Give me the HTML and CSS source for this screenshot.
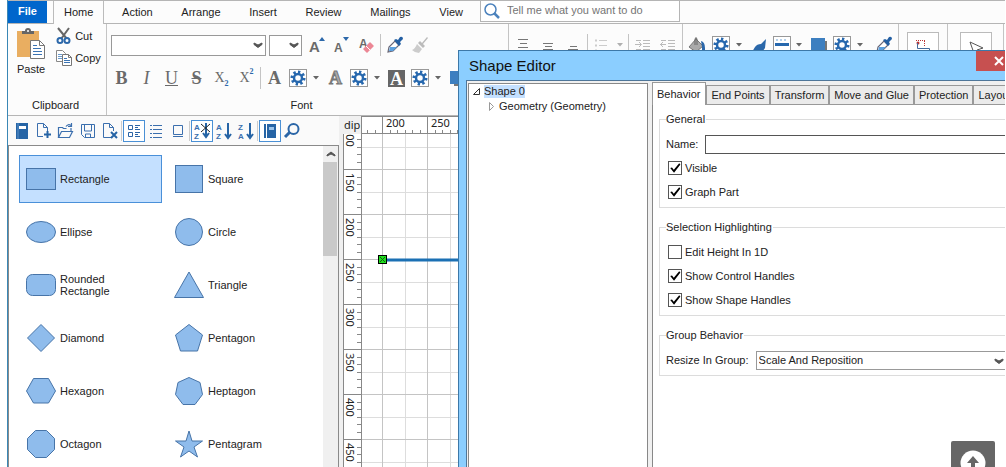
FILE: index.html
```html
<!DOCTYPE html>
<html lang="en">
<head>
    <meta charset="UTF-8">
    <meta name="viewport" content="width=device-width, initial-scale=1.0">
    <title>Shape Editor</title>
    <link rel="stylesheet" href="styles.css">
</head>
<body>
    <!-- shared icons -->
    <svg class="sprite" width="0" height="0">
        <symbol id="chevron" viewBox="0 0 10 6"><path d="M1 1v1.500l4 3 4-3V1L5 3z" fill="#555" stroke="#555"/></symbol>
        <symbol id="caret" viewBox="0 0 6 4"><path d="M0 0h6L3 3.500z" fill="#666"/></symbol>
        <symbol id="gear" viewBox="0 0 18 18">
            <rect x=".5" y=".5" width="17" height="17" fill="#fff" stroke="#999"/>
            <circle cx="9" cy="9" r="6" fill="none" stroke="#2768ae" stroke-width="3" pathLength="16" stroke-dasharray="1 1"/>
            <circle cx="9" cy="9" r="4" fill="none" stroke="#2768ae" stroke-width="2.500"/>
        </symbol>
        <symbol id="dropper" viewBox="0 0 18 18">
            <path d="M2 16l1-5 6-6 4 4-6 6z" fill="#fff" stroke="#667" stroke-width="1.200"/>
            <path d="M3 15l1-4h7l-4 4z" fill="#5ca1df"/>
            <path d="M8 4l2-1 2 1 2-3q3-1 3 2l-3 3 1 2-2 2z" fill="#235fa3"/>
        </symbol>
        <symbol id="swatch" viewBox="0 0 18 18"><path d="M5 5h12v12H5z" fill="#777"/><path d="M1 2h14v13H1z" fill="#3d7fc0"/></symbol>
        <symbol id="brush" viewBox="0 0 18 18"><path d="M17 3l-1 9q-3 5-8 5H2v-2q3-1 4-4 2-3 6-3z" fill="#2b68aa"/></symbol>
    </svg>

    <div class="app">
        <nav class="ribbon-tabs">
            <button class="file-tab">File</button>
            <div class="tab-list">
                <button class="tab active">Home</button>
                <button class="tab">Action</button>
                <button class="tab">Arrange</button>
                <button class="tab">Insert</button>
                <button class="tab">Review</button>
                <button class="tab">Mailings</button>
                <button class="tab">View</button>
            </div>
            <label class="search">
                <svg width="18" height="18" viewBox="0 0 18 18"><circle cx="7.500" cy="7.500" r="5.500" fill="#fff" stroke="#4c82bd" stroke-width="1.500"/><path d="M11 11l5 5" stroke="#4c82bd" stroke-width="2.500"/></svg>
                <input type="text" placeholder="Tell me what you want to do" aria-label="Search">
            </label>
        </nav>

        <div class="ribbon">
            <section class="group clipboard">
                <div class="clip-tools">
                    <button class="paste">
                        <svg width="28" height="32" viewBox="0 0 28 32">
                            <path d="M0 3h22v26H0z" fill="#e9ae61"/>
                            <path d="M5 6V3h3q0-3 3-3t3 3h3v3z" fill="#666"/><circle cx="11" cy="3" r="1" fill="#fff"/>
                            <path d="M13.500 12.500h9l5 5v13h-14z" fill="#fff" stroke="#777"/><path d="M22.500 12.500v5h5" fill="none" stroke="#777"/>
                            <path d="M16 17.500h4M16 20.500h8M16 23.500h9M16 26.500h9" stroke="#3b74b4"/>
                        </svg>
                        Paste
                    </button>
                    <div class="clip-list">
                        <button class="clip-item">
                            <svg width="16" height="16" viewBox="0 0 16 16"><path d="M2 0l9 11M13 0L5 11" stroke="#666" stroke-width="2"/><circle cx="4" cy="12.500" r="2.500" fill="#fff" stroke="#2c68aa" stroke-width="2"/><circle cx="11" cy="12.500" r="2.500" fill="#fff" stroke="#2c68aa" stroke-width="2"/></svg>
                            Cut
                        </button>
                        <button class="clip-item">
                            <svg width="16" height="16" viewBox="0 0 16 16"><path d="M.5.5h6l3 3v8h-9z" fill="#fff" stroke="#888"/><path d="M2 4.500h4M2 6.500h4M2 8.500h4" stroke="#6b9bcd"/><path d="M6.500 4.500h6l3 3v8h-9z" fill="#fff" stroke="#777"/><path d="M12.500 4.500v3h3" fill="none" stroke="#777"/><path d="M8 8.500h3M8 10.500h6M8 12.500h6" stroke="#3b74b4"/></svg>
                            Copy
                        </button>
                    </div>
                </div>
                <div class="group-label">Clipboard</div>
            </section>

            <section class="group font">
                <div class="row">
                    <span class="combo family"><select aria-label="Font family"><option></option></select><svg width="10" height="6"><use href="#chevron"/></svg></span>
                    <span class="combo size"><select aria-label="Font size"><option></option></select><svg width="10" height="6"><use href="#chevron"/></svg></span>
                    <button class="tool"><svg width="18" height="18" viewBox="0 0 18 18"><text x="1" y="16" class="glyph-a big">A</text><path d="M11 5l3-4 3 4z" fill="#2c68aa"/></svg></button>
                    <button class="tool"><svg width="18" height="18" viewBox="0 0 18 18"><text x="1" y="16" class="glyph-a">A</text><path d="M10 1h6l-3 4z" fill="#2c68aa"/></svg></button>
                    <button class="tool"><svg width="18" height="18" viewBox="0 0 18 18"><text x="1" y="12" class="glyph-a">A</text><path d="M12 7l3 3-6 6-3-3z" fill="#ec8795" stroke="#ec8795" stroke-linejoin="round" stroke-width="1.500"/><path d="M8 10l4 4" stroke="#fff"/></svg></button>
                    <i class="sep"></i>
                    <button class="tool"><svg width="18" height="18"><use href="#dropper"/></svg></button>
                    <button class="tool"><svg width="18" height="18" viewBox="0 0 18 18"><path d="M16 1l1 1-5 6 2 2-2 2-5-5 2-2 2 2z" fill="#bbb"/><path d="M6 8l5 5-3 4q-4 0-7-3 3-1 5-6z" fill="#ccc"/></svg></button>
                </div>
                <div class="row">
                    <button class="tool letter bold">B</button>
                    <button class="tool letter italic">I</button>
                    <button class="tool letter underline">U</button>
                    <button class="tool letter strike">S</button>
                    <button class="tool letter script">X<sub>2</sub></button>
                    <button class="tool letter script">X<sup>2</sup></button>
                    <i class="sep"></i>
                    <button class="tool letter bold">A</button>
                    <button class="gear"><svg width="18" height="18"><use href="#gear"/></svg></button>
                    <button class="drop"><svg width="6" height="4"><use href="#caret"/></svg></button>
                    <button class="tool letter bold outline">A</button>
                    <button class="gear"><svg width="18" height="18"><use href="#gear"/></svg></button>
                    <button class="drop"><svg width="6" height="4"><use href="#caret"/></svg></button>
                    <button class="tool letter"><span class="inverse">A</span></button>
                    <button class="gear"><svg width="18" height="18"><use href="#gear"/></svg></button>
                    <button class="drop"><svg width="6" height="4"><use href="#caret"/></svg></button>
                    <button class="tool"><svg width="18" height="18"><use href="#swatch"/></svg></button>
                </div>
                <div class="group-label">Font</div>
            </section>

            <section class="group paragraph">
                <div class="row">
                    <button class="tool"><svg width="18" height="18" viewBox="0 0 18 18"><path d="M4 3.500h10M6 7.500h7M4 11.500h10" stroke="#777"/></svg></button>
                    <button class="tool"><svg width="18" height="18" viewBox="0 0 18 18"><path d="M4 7.500h10M6 10.500h7M4 13.500h10" stroke="#777"/></svg></button>
                    <button class="tool"><svg width="18" height="18" viewBox="0 0 18 18"><path d="M6 10.500h7M4 13.500h10" stroke="#777"/></svg></button>
                    <i class="sep"></i>
                    <button class="tool"><svg width="18" height="18" viewBox="0 0 18 18"><path d="M3 4.500h2M3 9.500h2M3 14.500h2" stroke="#ccc" stroke-width="2"/><path d="M7 4.500h8M7 9.500h8M7 14.500h8" stroke="#ccc"/></svg></button>
                    <button class="drop faded"><svg width="6" height="4"><use href="#caret"/></svg></button>
                    <i class="sep"></i>
                    <button class="tool"><svg width="18" height="18" viewBox="0 0 18 18"><path d="M2 4.500h5M9 4.500h7M9 7.500h7M9 10.500h7M2 13.500h5M9 13.500h7M1 8.500h6M5 6l2.500 2.500L5 11" fill="none" stroke="#bbb"/></svg></button>
                    <button class="tool"><svg width="18" height="18" viewBox="0 0 18 18"><path d="M2 4.500h5M9 4.500h7M9 7.500h7M9 10.500h7M2 13.500h5M9 13.500h7M1 8.500h6M4 6L1.500 8.500 4 11" fill="none" stroke="#bbb"/></svg></button>
                </div>
            </section>

            <section class="group drawing">
                <div class="row">
                    <button class="tool"><svg width="18" height="18" viewBox="0 0 18 18"><path d="M8 3l7 7-7 6-7-5z" fill="#aaa" stroke="#777"/><path d="M7 9V3q1-3 2 0v6" fill="none" stroke="#666"/><path d="M13 5q4 1 4 7v4h-3v-5z" fill="#2c68aa"/></svg></button>
                    <button class="gear"><svg width="18" height="18"><use href="#gear"/></svg></button>
                    <button class="drop"><svg width="6" height="4"><use href="#caret"/></svg></button>
                    <button class="tool"><svg width="18" height="18"><use href="#brush"/></svg></button>
                    <button class="gear"><svg width="18" height="18" viewBox="0 0 18 18"><rect x=".5" y=".5" width="17" height="17" fill="#fff" stroke="#999"/><path d="M3 4h12" stroke="#6ba3d7" stroke-dasharray="2 2"/><path d="M2 8.500h14" stroke="#2768ae" stroke-width="3"/></svg></button>
                    <button class="drop"><svg width="6" height="4"><use href="#caret"/></svg></button>
                    <button class="tool"><svg width="18" height="18"><use href="#swatch"/></svg></button>
                    <button class="gear"><svg width="18" height="18"><use href="#gear"/></svg></button>
                    <button class="drop"><svg width="6" height="4"><use href="#caret"/></svg></button>
                    <button class="tool last"><svg width="18" height="18"><use href="#dropper"/></svg></button>
                </div>
            </section>

            <section class="group connector">
                <button class="large"><svg width="18" height="18" viewBox="0 0 18 18"><path d="M2 1.500h9M10.500 2v6" stroke="#b33" stroke-dasharray="1 1"/><circle cx="4" cy="4" r="1.500" fill="#b33"/><path d="M3.500 4v5.500h12V17" fill="none" stroke="#446b9c"/></svg></button>
            </section>
            <section class="group pointer">
                <button class="large"><svg width="18" height="18" viewBox="0 0 18 18"><path d="M3 3l13 6-6 2-2 6z" fill="#fff" stroke="#555"/></svg></button>
            </section>
        </div>

        <div class="workspace">
            <aside class="library">
                <div class="toolbar">
                    <button><svg width="16" height="16" viewBox="0 0 16 16"><path d="M2 0h12v16H2z" fill="#2664a5"/><path d="M5 3h7v3H5z" fill="#fff"/><path d="M4 0v16" stroke="#5b93cb"/></svg></button>
                    <button><svg width="16" height="16" viewBox="0 0 16 16"><path d="M7 13.500H1.500V.5h6l4 4V8M7.500.5v4h4" fill="none" stroke="#3b6fae"/><path d="M11.500 8v7M8 11.500h7" stroke="#2664a5" stroke-width="2"/></svg></button>
                    <button><svg width="16" height="16" viewBox="0 0 16 16"><path d="M.5 14.500V4.500h4l1 1h3M.5 14.500l3-6h11l-3 6zM8 3.500q2-3 5-1M13.500 0v3.500H10M13 5v3" fill="none" stroke="#3b6fae" stroke-width="1.200"/></svg></button>
                    <button><svg width="16" height="16" viewBox="0 0 16 16"><path d="M1.500 1.500h13v13h-10l-3-3zM4.500 2v6h7V2M5.500 14v-3h5v3" fill="none" stroke="#3b6fae"/></svg></button>
                    <button><svg width="16" height="16" viewBox="0 0 16 16"><path d="M9 14.500H1.500V.5h6l4 4V8M7.500.5v4h4" fill="none" stroke="#3b6fae"/><path d="M9 9l6 6M15 9l-6 6" stroke="#2664a5" stroke-width="2"/></svg></button>
                    <i class="tool-sep"></i>
                    <button class="pressed"><svg width="16" height="16" viewBox="0 0 16 16"><path d="M2.500 2.500h4v4h-4zM2.500 9.500h4v4h-4zM9 2.500h5M9 4.500h3M9 6.500h5M9 9.500h5M9 11.500h3M9 13.500h5" fill="none" stroke="#2b64a5"/></svg></button>
                    <button><svg width="16" height="16" viewBox="0 0 16 16"><path d="M2 2.500h2M2 6.500h2M2 10.500h2M2 14.500h2M5 2.500h9M5 6.500h9M5 10.500h9M5 14.500h9" stroke="#3b6fae"/></svg></button>
                    <button><svg width="16" height="16" viewBox="0 0 16 16"><path d="M3.500 2.500h9v9h-9zM3 13.500h10" fill="none" stroke="#3b6fae"/></svg></button>
                    <i class="tool-sep"></i>
                    <button class="pressed"><svg width="18" height="18" viewBox="0 0 18 18"><text x="1" y="8">A</text><text x="1" y="17">Z</text><path d="M13 1v13M10 11l3 4 3-4" fill="none" stroke="#2664a5" stroke-width="2"/><path d="M8 2l9 8M17 2l-9 8" stroke="#222"/></svg></button>
                    <button><svg width="18" height="18" viewBox="0 0 18 18"><text x="1" y="8">A</text><text x="1" y="17">Z</text><path d="M13 1v14M10 12l3 4 3-4" fill="none" stroke="#2664a5" stroke-width="2"/></svg></button>
                    <button><svg width="18" height="18" viewBox="0 0 18 18"><text x="1" y="8">Z</text><text x="1" y="17">A</text><path d="M13 1v14M10 12l3 4 3-4" fill="none" stroke="#2664a5" stroke-width="2"/></svg></button>
                    <i class="tool-sep"></i>
                    <button class="pressed"><svg width="16" height="16" viewBox="0 0 16 16"><path d="M2 1h12v14H2z" fill="#2664a5"/><path d="M4.500 1v14" stroke="#fff"/><path d="M7 4h5v3H7z" fill="#9cc4ea"/></svg></button>
                    <button><svg width="18" height="18" viewBox="0 0 18 18"><circle cx="10.500" cy="7" r="5" fill="none" stroke="#2b66a7" stroke-width="2"/><path d="M7 10l-5 5" stroke="#2b66a7" stroke-width="3"/></svg></button>
                </div>
                <div class="shape-pane">
                    <div class="shapes">
                        <button class="shape selected"><svg width="30" height="30"><rect x=".5" y="4.500" width="29" height="21"/></svg>Rectangle</button>
                        <button class="shape"><svg width="30" height="30"><rect x="1.500" y="1.500" width="27" height="27"/></svg>Square</button>
                        <button class="shape"><svg width="30" height="30"><ellipse cx="15" cy="15" rx="14.500" ry="10.500"/></svg>Ellipse</button>
                        <button class="shape"><svg width="30" height="30"><circle cx="15" cy="15" r="13.500"/></svg>Circle</button>
                        <button class="shape"><svg width="30" height="30"><rect x=".5" y="4.500" width="29" height="21" rx="6"/></svg>Rounded<br>Rectangle</button>
                        <button class="shape"><svg width="30" height="30"><path d="M15 2l14.500 25.500H.5z"/></svg>Triangle</button>
                        <button class="shape"><svg width="30" height="30"><path d="M15 1.500L28.500 15 15 28.500 1.500 15z"/></svg>Diamond</button>
                        <button class="shape"><svg width="30" height="30"><path d="M15 1.500l13.500 10.500-5 16h-17l-5-16z"/></svg>Pentagon</button>
                        <button class="shape"><svg width="30" height="30"><path d="M.5 15l7-12.500h15l7 12.500-7 12h-15z"/></svg>Hexagon</button>
                        <button class="shape"><svg width="30" height="30"><path d="M15 1.500l11 5 2.500 12-7.500 10H9l-7.500-10L4 6.500z"/></svg>Heptagon</button>
                        <button class="shape"><svg width="30" height="30"><path d="M9.500 1.500h11l8 8v11l-8 8h-11l-8-8v-11z"/></svg>Octagon</button>
                        <button class="shape"><svg width="30" height="30"><path d="M15 2l3 10h10.500l-8.500 6 3.500 10-8.500-6-8.500 6 3.500-10-8.500-6H12z"/></svg>Pentagram</button>
                    </div>
                    <div class="scrollbar">
                        <div class="scroll-up"><svg width="10" height="6" viewBox="0 0 10 6"><path d="M1 5V4l4-3 4 3v1L5 3z" fill="#555" stroke="#555"/></svg></div>
                        <div class="thumb"></div>
                    </div>
                </div>
            </aside>

            <main class="canvas">
                <div class="unit">dip</div>
                <svg class="ruler-top">
                    <defs>
                        <pattern id="ticks-x" x="20" width="45" height="17" patternUnits="userSpaceOnUse">
                            <path d="M.5 0v17M8.500 13v4M15.500 13v4M23.500 13v4M30.500 13v4M38.500 13v4" stroke="#888"/>
                        </pattern>
                        <pattern id="ticks-y" y="35" width="18" height="45" patternUnits="userSpaceOnUse">
                            <path d="M0 .5h18M13 8.500h5M13 15.500h5M13 23.500h5M13 30.500h5M13 38.500h5" stroke="#888"/>
                        </pattern>
                        <pattern id="grid" x="20" y="35" width="45" height="45" patternUnits="userSpaceOnUse">
                            <path d="M23.500 0v45M0 23.500h45" stroke="#ddd"/>
                            <path d="M.5 0v45M0 .5h45" stroke="#c4c4c4"/>
                        </pattern>
                    </defs>
                    <rect width="100%" height="100%" fill="url(#ticks-x)"/>
                    <text x="24" y="10">200</text>
                    <text x="69" y="10">250</text>
                </svg>
                <svg class="ruler-left">
                    <rect width="100%" height="100%" fill="url(#ticks-y)"/>
                    <text transform="translate(2 -6) rotate(90)">100</text>
                    <text transform="translate(2 39) rotate(90)">150</text>
                    <text transform="translate(2 84) rotate(90)">200</text>
                    <text transform="translate(2 129) rotate(90)">250</text>
                    <text transform="translate(2 174) rotate(90)">300</text>
                    <text transform="translate(2 219) rotate(90)">350</text>
                    <text transform="translate(2 264) rotate(90)">400</text>
                    <text transform="translate(2 309) rotate(90)">450</text>
                </svg>
                <svg class="sheet">
                    <rect width="100%" height="100%" fill="url(#grid)"/>
                    <path d="M20 126h400" stroke="#1b70b4" stroke-width="3"/>
                    <rect x="16.500" y="121.500" width="8" height="8" fill="#1fe01f" stroke="#000"/>
                    <path d="M18 123l5 5M23 123l-5 5" stroke="#145c14"/>
                </svg>
            </main>
        </div>

        <div class="dialog">
            <header class="dialog-title">
                <span>Shape Editor</span>
                <button class="close" aria-label="Close"><svg width="10" height="10"><path d="M1 1l8 8M9 1L1 9" stroke="#fff" stroke-width="2"/></svg></button>
            </header>
            <div class="dialog-body">
                <div class="tree">
                    <div class="node"><svg width="9" height="9"><path d="M1.500 7.500h6v-6z" fill="#fff" stroke="#333"/></svg><span class="current">Shape 0</span></div>
                    <div class="node child"><svg width="9" height="9"><path d="M2.500.500v8l4-4z" fill="#fff" stroke="#999"/></svg><span>Geometry (Geometry)</span></div>
                </div>
                <div class="editor">
                    <div class="page-tabs">
                        <button class="active">Behavior</button>
                        <button>End Points</button>
                        <button>Transform</button>
                        <button>Move and Glue</button>
                        <button>Protection</button>
                        <button>Layout</button>
                    </div>
                    <form class="page">
                        <fieldset>
                            <legend>General</legend>
                            <div class="field"><label for="name">Name:</label><input type="text" id="name"></div>
                            <label class="check"><input type="checkbox" checked>Visible</label>
                            <label class="check"><input type="checkbox" checked>Graph Part</label>
                        </fieldset>
                        <fieldset>
                            <legend>Selection Highlighting</legend>
                            <label class="check"><input type="checkbox">Edit Height In 1D</label>
                            <label class="check"><input type="checkbox" checked>Show Control Handles</label>
                            <label class="check"><input type="checkbox" checked>Show Shape Handles</label>
                        </fieldset>
                        <fieldset>
                            <legend>Group Behavior</legend>
                            <div class="field">
                                <label for="resize">Resize In Group:</label>
                                <span class="combo"><select id="resize"><option>Scale And Reposition</option></select><svg width="10" height="6"><use href="#chevron"/></svg></span>
                            </div>
                        </fieldset>
                    </form>
                </div>
            </div>
        </div>
    </div>

    <button class="to-top" aria-label="Back to top">
        <svg width="26" height="26" viewBox="0 0 26 26"><circle cx="13" cy="13" r="12.500" fill="#fff"/><path d="M13 6l6 7h-4v7h-4v-7H7z" fill="#666"/></svg>
    </button>
</body>
</html>
```

FILE: styles.css
```css
* {
    box-sizing: border-box;
}
body {
    margin: 0;
    padding: 0 1px 0 7px;
    height: 100vh;
    overflow: hidden;
    background: #fff;
    color: #222;
    font: 11px/13px "Liberation Sans", Arial, sans-serif;
}
button, input, select {
    font: inherit;
    color: inherit;
    margin: 0;
}
button {
    display: flex;
    align-items: center;
    justify-content: center;
    padding: 0;
    border: 0;
    background: none;
    white-space: nowrap;
}
svg {
    display: block;
    flex: none;
    overflow: visible;
}
.sprite {
    position: absolute;
}
.app {
    position: relative;
    display: flex;
    flex-direction: column;
    height: 100%;
    overflow: hidden;
    border-left: 1px solid #3a87b5;
}

/* ribbon tabs */
.ribbon-tabs {
    display: flex;
    height: 24px;
    border-top: 1px solid #b5b5b5;
    border-bottom: 1px solid #b5b5b5;
    background: #fcfcfc;
}
.file-tab {
    width: 39px;
    margin-right: 6px;
    padding-bottom: 2px;
    background: #0066cc;
    color: #fff;
    font-weight: bold;
}
.tab-list {
    display: flex;
    justify-content: space-between;
    width: 421px;
}
.tab {
    height: 23px;
    padding: 0 10px;
    border: 1px solid transparent;
    border-width: 0 1px;
}
.tab.active {
    border-color: #bbb;
    background: #fcfcfc;
}
.search {
    display: flex;
    align-items: center;
    width: 200px;
    height: 21px;
    margin-left: 6px;
    padding-left: 2px;
    border: 1px solid #b5b5b5;
    border-top: 0;
    background: #fff;
}
.search input {
    flex: 1;
    min-width: 0;
    padding: 0 0 2px 6px;
    border: 0;
    outline: 0;
    background: none;
}
.search input::placeholder {
    color: #757575;
}

/* ribbon */
.ribbon {
    display: flex;
    height: 92px;
    border-bottom: 1px solid #b5b5b5;
    background: #fcfcfc;
}
.group {
    display: flex;
    flex: none;
    flex-direction: column;
    padding: 9px 2px 3px;
    border-right: 1px solid #c4c4c4;
}
.group-label {
    margin-top: auto;
    padding-right: 12px;
    text-align: center;
}
.clipboard {
    width: 99px;
    padding: 4px 0 3px 9px;
}
.clip-tools {
    display: flex;
    gap: 11px;
}
.paste {
    flex-direction: column;
    gap: 3px;
}
.clip-list {
    display: flex;
    flex-direction: column;
    gap: 6px;
}
.clip-item {
    justify-content: flex-start;
    height: 16px;
    gap: 3px;
}
.font {
    width: 402px;
}
.paragraph {
    width: 174px;
}
.drawing {
    width: 216px;
}
.connector {
    width: 49px;
}
.pointer {
    width: 56px;
}
.connector, .pointer {
    align-items: center;
    padding-top: 8px;
}
.large {
    width: 32px;
    height: 32px;
    border: 1px solid #bbb;
    background: #fff;
}
.row {
    display: flex;
    align-items: center;
    height: 24px;
    margin-bottom: 9px;
}
.tool {
    width: 25px;
    height: 24px;
}
.last {
    margin-left: 4px;
}
.gear {
    width: 22px;
}
.drop {
    width: 14px;
}
.faded {
    opacity: .5;
}
.sep {
    width: 1px;
    height: 22px;
    margin: 0 1px;
    background: #c4c4c4;
}
.letter {
    color: #6a6a6a;
    font: 18px/20px "Liberation Serif", "Times New Roman", serif;
}
.bold {
    font-weight: bold;
}
.italic {
    font-style: italic;
}
.underline {
    text-decoration: underline;
}
.strike {
    font-weight: bold;
    text-decoration: line-through;
}
.script {
    font-size: 14px;
}
.letter sub, .letter sup {
    align-self: flex-end;
    color: #2c68aa;
    font-size: 8px;
    font-weight: bold;
    line-height: 12px;
}
.letter sup {
    align-self: flex-start;
}
.outline {
    color: #aaa;
    -webkit-text-stroke: 1px #777;
}
.inverse {
    width: 17px;
    height: 17px;
    background: #666;
    color: #fff;
    font-weight: bold;
    line-height: 18px;
}
.glyph-a {
    fill: #6a6a6a;
    font: bold 12px "Liberation Sans", Arial, sans-serif;
}
.glyph-a.big {
    font-size: 15px;
}
.combo {
    position: relative;
    display: flex;
}
.combo select {
    width: 100%;
    height: 21px;
    padding: 0 2px;
    border: 1px solid #999;
    border-radius: 0;
    background: #fff;
    appearance: none;
}
.combo svg {
    position: absolute;
    right: 3px;
    top: 7px;
    pointer-events: none;
}
.family {
    width: 155px;
    margin: 0 3px 0 2px;
}
.size {
    width: 33px;
    margin-right: 2px;
}

/* shape library */
.workspace {
    display: flex;
    flex: 1;
    min-height: 0;
    background: #f0f0f0;
}
.library {
    display: flex;
    flex: none;
    flex-direction: column;
    width: 331px;
}
.toolbar {
    display: flex;
    align-items: center;
    height: 29px;
    padding-left: 3px;
    background: #fafafa;
}
.toolbar button {
    width: 22px;
    height: 22px;
}
.toolbar text {
    fill: #3b6fae;
    font-size: 8px;
    font-weight: bold;
}
.toolbar .pressed {
    border: 1px solid #4a90d5;
    background: #fff;
}
.tool-sep {
    width: 1px;
    height: 20px;
    margin-right: 1px;
    background: #ccc;
}
.shape-pane {
    display: flex;
    flex: 1;
    min-height: 0;
    border: 1px solid #8a8a8a;
    border-bottom: 0;
    background: #fff;
}
.shapes {
    display: grid;
    flex: 1;
    grid-template-columns: 143px 143px;
    grid-auto-rows: 48px;
    gap: 5px;
    padding: 9px 10px;
    overflow: hidden;
}
.shape {
    justify-content: flex-start;
    gap: 4px;
    padding: 0 6px;
    border: 1px solid transparent;
    line-height: 12px;
    text-align: left;
}
.shape.selected {
    border-color: #4a90d9;
    background: #c4e0ff;
}
.shape svg {
    fill: #8fbcec;
    stroke: #4774a8;
}
.scrollbar {
    width: 15px;
    background: #f0f0f0;
}
.scroll-up {
    display: flex;
    align-items: center;
    justify-content: center;
    height: 16px;
}
.thumb {
    width: 14px;
    height: 94px;
    background: #c9c9c9;
}

/* drawing canvas */
.canvas {
    display: grid;
    flex: 1;
    grid-template-columns: 19px 1fr;
    grid-template-rows: 18px 1fr;
    padding-left: 4px;
}
.canvas svg {
    width: 100%;
    height: 100%;
    overflow: hidden;
    background: #fff;
}
.canvas text, .unit {
    fill: #222;
    font-family: "Noto Sans", sans-serif;
    font-size: 11px;
}
.unit {
    padding: 2px 0 0 1px;
    border-right: 1px solid #888;
}
.ruler-top {
    border-top: 1px solid #888;
    border-bottom: 1px solid #888;
}
.ruler-left {
    border: 1px solid #888;
    border-width: 0 1px;
}

/* shape editor dialog */
.dialog {
    position: absolute;
    top: 50px;
    left: 450px;
    display: flex;
    flex-direction: column;
    width: 571px;
    height: 480px;
    padding: 0 7px;
    border: 1px solid #3c78a8;
    background: #8bceff;
}
.dialog-title {
    display: flex;
    justify-content: space-between;
    height: 29px;
    padding-left: 3px;
    color: #111;
    font-size: 15px;
    line-height: 30px;
}
.close {
    width: 45px;
    height: 20px;
    background: #c75050;
}
.dialog-body {
    display: flex;
    flex: 1;
    gap: 4px;
    padding: 1px 0 0 1px;
    border: 1px solid #4f7699;
    background: #f0f0f0;
}
.tree {
    width: 180px;
    margin-top: 1px;
    border: 1px solid #888;
    background: #fff;
}
.node {
    display: flex;
    align-items: center;
    gap: 3px;
    height: 15px;
    padding-left: 3px;
}
.child {
    padding-left: 18px;
}
.current {
    background: #c4e0ff;
}
.editor {
    display: flex;
    flex: 1;
    flex-direction: column;
    min-width: 0;
}
.page-tabs {
    display: flex;
    align-items: flex-end;
    height: 23px;
}
.page-tabs button {
    flex: none;
    height: 20px;
    padding: 0 4px;
    border: 1px solid #999;
    background: #ebebeb;
}
.page-tabs .active {
    height: 23px;
    padding: 0 5px 0 4px;
    border-bottom: 0;
    background: #fff;
}
.page {
    flex: 1;
    padding: 8px 6px;
    border-left: 1px solid #888;
    background: #fff;
}
fieldset {
    min-width: 0;
    margin: 0 0 13px;
    padding: 6px 6px 3px;
    border: 1px solid #dcdcdc;
}
legend {
    padding: 0 1px 0 0;
}
.field, .check {
    display: flex;
    align-items: center;
    height: 24px;
}
.field label {
    margin-right: 7px;
}
.field input {
    flex: 1;
    height: 19px;
    border: 1px solid #555;
    background: #fff;
}
.field .combo {
    flex: 1;
}
.field select {
    height: 19px;
}
.check input {
    position: relative;
    width: 14px;
    height: 14px;
    margin: 0 3px 0 2px;
    border: 1px solid #555;
    background: #fff;
    appearance: none;
}
.check input:checked::before {
    content: "";
    display: block;
    width: 12px;
    height: 12px;
    background: #000;
    clip-path: polygon(10% 50%, 25% 45%, 40% 65%, 85% 10%, 95% 20%, 42% 90%);
}

.to-top {
    position: fixed;
    right: 11px;
    bottom: -18px;
    width: 44px;
    height: 44px;
    border-radius: 2px 2px 0 0;
    background: #666;
}
```
